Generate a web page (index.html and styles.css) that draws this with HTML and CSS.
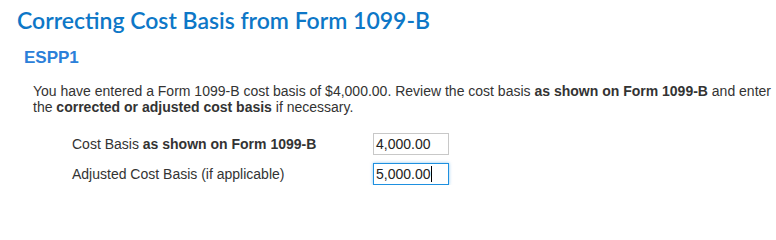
FILE: index.html
```html
<!DOCTYPE html>
<html>
<head>
<meta charset="utf-8">
<link rel="stylesheet" href="styles.css">
</head>
<body>
<div class="page">
  <h1 class="title">Correcting Cost Basis from Form 1099-B</h1>
  <h2 class="subtitle">ESPP1</h2>
  <p class="intro">You have entered a Form 1099-B cost basis of $4,000.00. Review the cost basis <b>as shown on Form 1099-B</b> and enter the <b>corrected or adjusted cost basis</b> if necessary.</p>
  <div class="fields">
    <div class="row">
      <label class="label">Cost Basis <b>as shown on Form 1099-B</b></label>
      <div class="input">4,000.00</div>
    </div>
    <div class="row">
      <label class="label">Adjusted Cost Basis (if applicable)</label>
      <div class="input focused">5,000.00<span class="caret"></span></div>
    </div>
  </div>
</div>
</body>
</html>
```

FILE: styles.css
```css
html, body {
  margin: 0;
  padding: 0;
  background: #ffffff;
}
.page {
  padding: 6px 0 0 17px;
  font-family: "Liberation Sans", Arial, sans-serif;
  color: #333333;
}
.title {
  margin: 0;
  font-family: Lato, "Open Sans", sans-serif;
  font-weight: 600;
  font-size: 23px;
  line-height: 28px;
  color: #0d77c7;
  letter-spacing: 0;
}
.subtitle {
  margin: 14px 0 0 7px;
  font-size: 17px;
  line-height: 20px;
  font-weight: bold;
  color: #2b80d9;
}
.intro {
  margin: 15px 0 0 16px;
  font-size: 14px;
  line-height: 16px;
}
.fields {
  margin: 18px 0 0 55px;
  display: flex;
  flex-direction: column;
  gap: 8px;
}
.row {
  display: flex;
  align-items: center;
  height: 22px;
}
.label {
  width: 301px;
  font-size: 14px;
}
.input {
  box-sizing: border-box;
  width: 76px;
  height: 22px;
  border: 1px solid #c8c8c8;
  padding: 0 2px;
  font-size: 14px;
  line-height: 20px;
  color: #222;
  display: flex;
  align-items: center;
}
.input.focused {
  border-color: #1e90e0;
  box-shadow: 0 0 3px rgba(30, 144, 224, 0.5);
}
.caret {
  display: inline-block;
  width: 1px;
  height: 16px;
  background: #000;
}
```
